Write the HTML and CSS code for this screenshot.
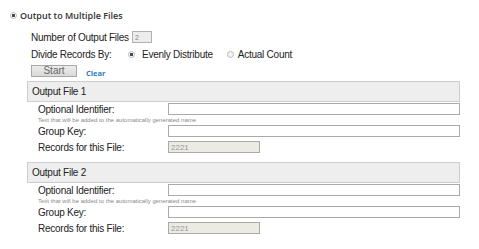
FILE: index.html
```html
<!DOCTYPE html>
<html lang="en">
<head>
    <meta charset="UTF-8">
    <title>Output to Multiple Files</title>
    <link rel="stylesheet" href="styles.css">
</head>
<body>
    <div class="panel">
        <label class="mode">
            <input type="radio" name="mode" checked>
            <span>Output to Multiple Files</span>
        </label>

        <div class="options">
            <div class="opt-row">
                <span class="opt-label">Number of Output Files</span>
                <input type="text" class="count" value="2" readonly>
            </div>
            <div class="opt-row">
                <span class="opt-label divide">Divide Records By:</span>
                <label class="choice"><input type="radio" name="divide" checked> Evenly Distribute</label>
                <label class="choice last"><input type="radio" name="divide"> Actual Count</label>
            </div>
            <div class="opt-row actions">
                <button type="button" class="start" disabled>Start</button>
                <a href="#" class="clear">Clear</a>
            </div>
        </div>

        <div class="file-section">
            <div class="file-head">Output File 1</div>
            <div class="field">
                <span class="field-label">Optional Identifier:</span>
                <input type="text" class="wide">
            </div>
            <div class="hint">Text that will be added to the automatically generated name</div>
            <div class="field">
                <span class="field-label">Group Key:</span>
                <input type="text" class="wide">
            </div>
            <div class="field records">
                <span class="field-label">Records for this File:</span>
                <input type="text" class="short" value="2221" disabled>
            </div>
        </div>

        <div class="file-section">
            <div class="file-head">Output File 2</div>
            <div class="field">
                <span class="field-label">Optional Identifier:</span>
                <input type="text" class="wide">
            </div>
            <div class="hint">Text that will be added to the automatically generated name</div>
            <div class="field">
                <span class="field-label">Group Key:</span>
                <input type="text" class="wide">
            </div>
            <div class="field records">
                <span class="field-label">Records for this File:</span>
                <input type="text" class="short" value="2221" disabled>
            </div>
        </div>
    </div>
</body>
</html>
```

FILE: styles.css
```css
body {
    margin: 0;
    background: #fff;
    color: #222;
    font-family: "Liberation Sans", Arial, sans-serif;
    font-size: 10px;
    letter-spacing: -0.25px;
}

.panel {
    padding: 9px 0 0 0;
}

input[type="radio"] {
    -webkit-appearance: none;
    appearance: none;
    width: 7px;
    height: 7px;
    margin: 0;
    border: 1px solid #b9b9b9;
    border-radius: 50%;
    background: #f4f4f4;
    box-sizing: border-box;
}

input[type="radio"]:checked {
    background: radial-gradient(circle, #4a4a4a 0 1.4px, #fff 1.9px);
}

.mode {
    display: flex;
    align-items: center;
    height: 12px;
    padding-left: 10px;
    gap: 3px;
    font-family: "Open Sans", sans-serif;
    font-weight: 600;
    font-size: 9px;
    letter-spacing: 0;
    color: #333;
}

.options {
    padding-left: 31px;
    margin-top: 10px;
}

.opt-row {
    display: flex;
    align-items: center;
    height: 12px;
    margin-bottom: 5px;
}

.opt-label {
    margin-right: 3px;
}

.opt-label.divide {
    width: 97px;
    margin-right: 0;
}

.count {
    width: 20px;
    height: 12px;
    box-sizing: border-box;
    border: 1px solid #b0b0b0;
    background: #ececec;
    font-size: 7px;
    color: #888;
    padding: 0 2px;
}

.choice {
    display: flex;
    align-items: center;
    gap: 7px;
    margin-right: 14px;
}

.choice.last {
    gap: 4px;
}

.actions {
    margin-top: 1px;
    margin-bottom: 4px;
}

.start {
    width: 46px;
    height: 12px;
    padding: 0;
    border: 1px solid #a8a8a8;
    background: linear-gradient(#ececec, #d9d9d9);
    color: #666;
    font-family: "Liberation Sans", sans-serif;
    font-size: 10px;
    line-height: 10px;
}

.clear {
    margin: 3px 0 0 9px;
    color: #2d7bbd;
    font-family: "Open Sans", sans-serif;
    font-weight: 700;
    font-size: 7.5px;
    letter-spacing: 0;
    text-decoration: none;
}

.file-section {
    width: 433px;
    margin: 0 0 9px 27px;
}

.file-head {
    height: 21px;
    box-sizing: border-box;
    border: 1px solid #cdcdcd;
    background: #eeeeee;
    padding-left: 4px;
    line-height: 19px;
    margin-bottom: 1px;
}

.field {
    display: flex;
    align-items: center;
    height: 12px;
}

.field-label {
    width: 141px;
    padding-left: 11px;
    box-sizing: border-box;
}

.field input {
    height: 12px;
    box-sizing: border-box;
    border: 1px solid #aaa;
    background: #fff;
    padding: 0 2px;
    font-family: "Liberation Sans", sans-serif;
    font-size: 8px;
    letter-spacing: 0;
    color: #999;
}

.wide {
    width: 292px;
}

.short {
    width: 92px;
}

.field input:disabled {
    background: #ebebe4;
}

.hint {
    height: 10px;
    padding-left: 11px;
    font-size: 6px;
    letter-spacing: 0;
    line-height: 10px;
    color: #8a8a8a;
}

.records {
    margin-top: 4px;
}
```
